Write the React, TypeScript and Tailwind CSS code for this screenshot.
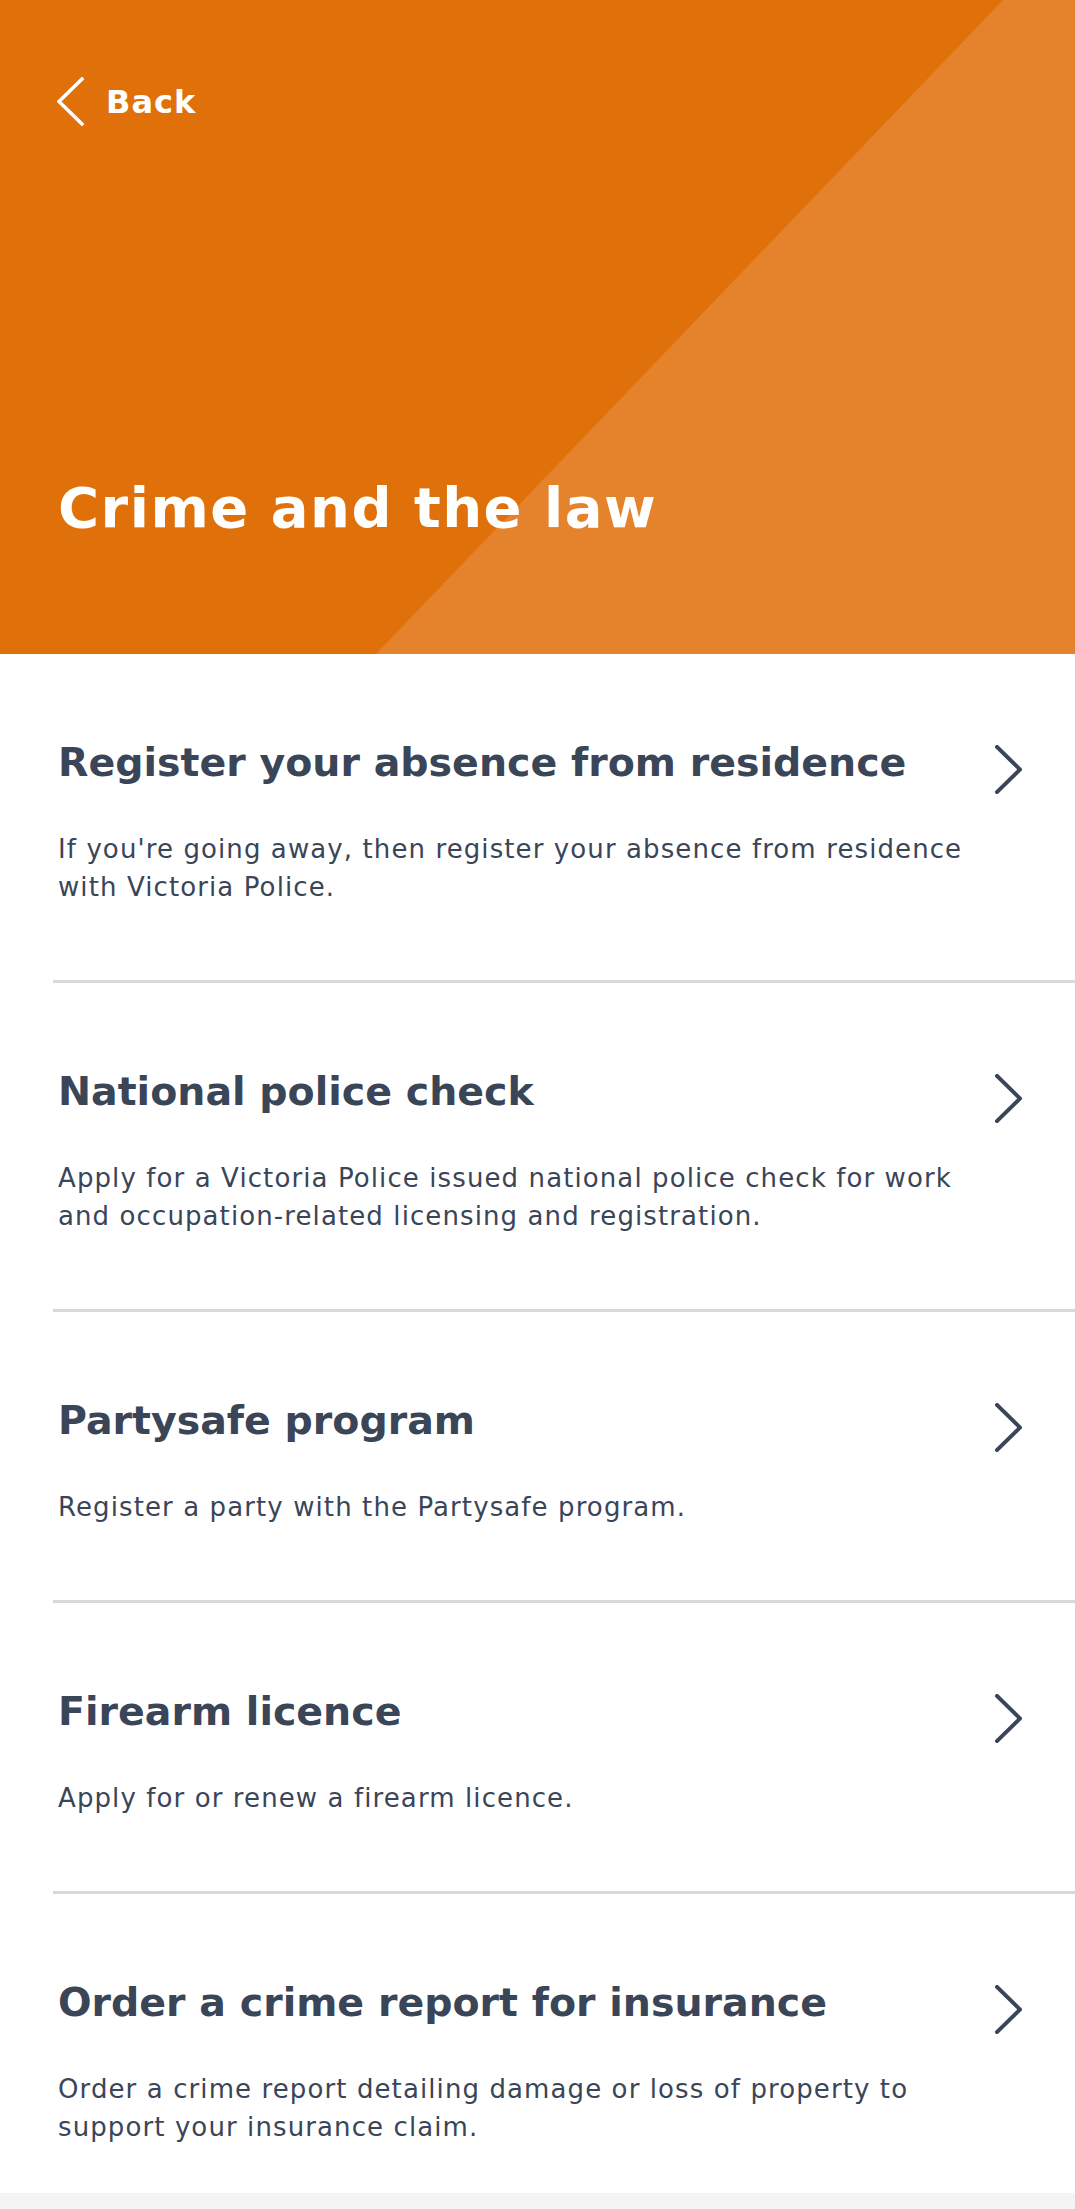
const items = [
  {
    title: 'Register your absence from residence',
    lines: ['If you\'re going away, then register your absence from residence', 'with Victoria Police.'],
  },
  {
    title: 'National police check',
    lines: ['Apply for a Victoria Police issued national police check for work', 'and occupation-related licensing and registration.'],
  },
  {
    title: 'Partysafe program',
    lines: ['Register a party with the Partysafe program.'],
  },
  {
    title: 'Firearm licence',
    lines: ['Apply for or renew a firearm licence.'],
  },
  {
    title: 'Order a crime report for insurance',
    lines: ['Order a crime report detailing damage or loss of property to', 'support your insurance claim.'],
  },
];

function Chevron({ dir, className, weight = 3.5 }: { dir: 'left' | 'right'; className?: string; weight?: number }) {
  const points = dir === 'right' ? '2,2 25,24.5 2,47' : '25,2 2,24.5 25,47';
  return (
    <svg width="27" height="49" viewBox="0 0 27 49" className={className} fill="none">
      <polyline points={points} stroke="currentColor" strokeWidth={weight} strokeLinecap="square" />
    </svg>
  );
}

export default function App() {
  return (
    <div className="min-h-[2209px] bg-[#f4f4f4] font-['DejaVu_Sans',sans-serif]">
      <header className="relative flex h-[654px] flex-col justify-between overflow-hidden bg-[#e0710a] pb-[116px]">
        <svg className="absolute inset-0 h-full w-full" viewBox="0 0 1075 654" preserveAspectRatio="none">
          <polygon points="1003,0 1075,0 1075,654 376,654" fill="#e4832c" />
        </svg>
        <div className="relative flex items-center gap-[22px] pl-[57px] pt-[77px] text-white">
          <Chevron dir="left" weight={3.5} />
          <span className="text-[32px] leading-none font-bold tracking-[1px]">Back</span>
        </div>
        <h1 className="relative pl-[58px] text-[56px] leading-[60px] font-bold tracking-[1.5px] text-white">
          Crime and the law
        </h1>
      </header>

      <div className="bg-white">
        {items.map((item, i) => (
          <div
            key={item.title}
            className={
              i === items.length - 1
                ? 'ml-[53px] flex pl-[5px] pr-[53px] pt-[84px] pb-[47px]'
                : 'ml-[53px] flex border-b-[3px] border-[#d9d9d9] pl-[5px] pr-[53px] pt-[84px] pb-[74px]'
            }
          >
            <div className="flex-1 text-[#3a4558]">
              <h2 className="text-[39.5px] leading-[48px] font-bold">{item.title}</h2>
              <p className="mt-[44px] text-[26px] leading-[38px] tracking-[1.1px]">
                {item.lines.map((line, j) => (
                  <span key={j} className="block whitespace-nowrap">
                    {line}
                  </span>
                ))}
              </p>
            </div>
            <Chevron dir="right" weight={4} className="mt-[7px] text-[#3a4558]" />
          </div>
        ))}
      </div>
    </div>
  );
}
